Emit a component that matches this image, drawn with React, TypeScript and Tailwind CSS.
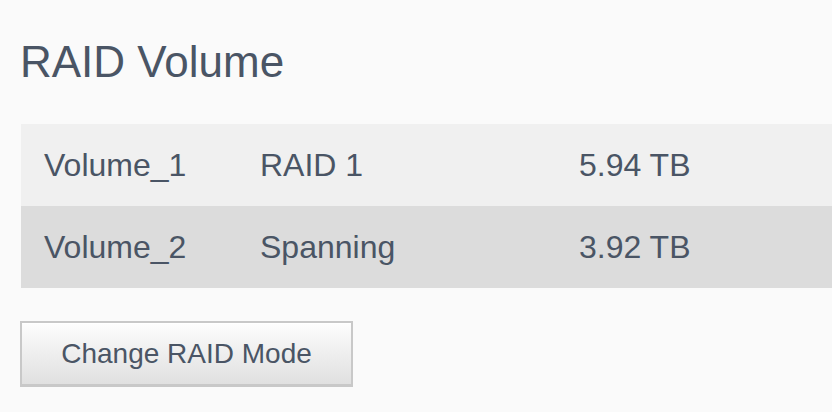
export default function App() {
  const volumes = [
    { name: 'Volume_1', mode: 'RAID 1', size: '5.94 TB', bg: 'bg-[#f0f0f0]' },
    { name: 'Volume_2', mode: 'Spanning', size: '3.92 TB', bg: 'bg-[#dcdcdc]' },
  ];

  return (
    <div className="w-[832px] h-[412px] overflow-hidden bg-[#fafafa] pl-[20px] pt-[40px] font-['Liberation_Sans',Arial,sans-serif] text-[#4a5565]">
      {/* Title */}
      <h1 className="text-[44px] leading-[43px] font-normal">RAID Volume</h1>

      {/* Volume table */}
      <div className="mt-[41px] ml-[1px] w-[900px] flex flex-col">
        {volumes.map((v) => (
          <div key={v.name} className={`flex h-[82px] items-center text-[32px] ${v.bg}`}>
            <div className="w-[239px] pl-[23px]">{v.name}</div>
            <div className="w-[319px]">{v.mode}</div>
            <div className="flex-1">{v.size}</div>
          </div>
        ))}
      </div>

      {/* Action */}
      <button className="mt-[33px] w-[333px] h-[66px] border-2 border-b-[3px] border-[#c8c8c8] bg-gradient-to-b from-[#fdfdfd] to-[#e0e0e0] text-[28px] text-[#4a5565] flex items-center justify-center shadow-[inset_0_1px_0_#ffffff]">
        Change RAID Mode
      </button>
    </div>
  );
}
